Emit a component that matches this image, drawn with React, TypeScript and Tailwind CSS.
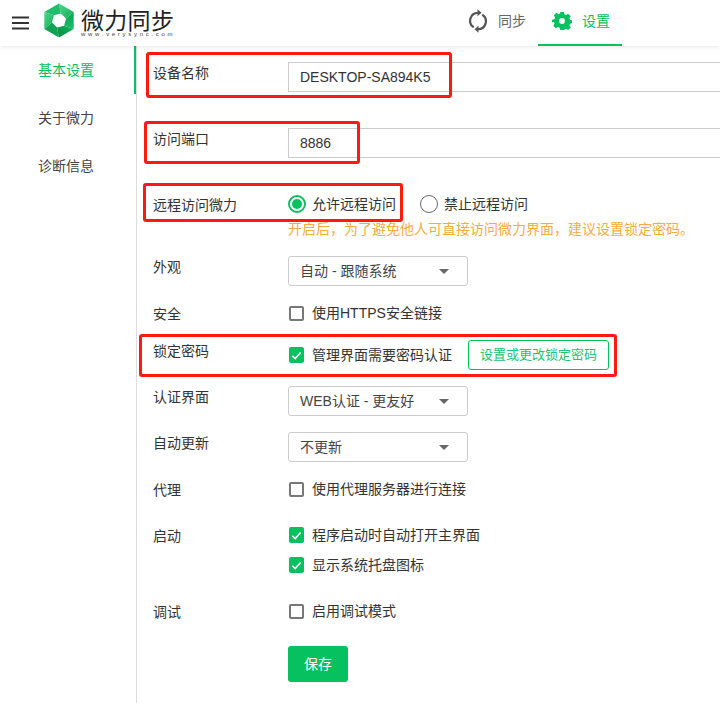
import React from "react";

const font = '"Liberation Sans","Noto Sans CJK SC",sans-serif';

function Row({ label, className = "", children }: { label: string; className?: string; children: React.ReactNode }) {
  return (
    <div className={`flex ${className}`}>
      <div className="w-[135px] h-[20px] pt-[1px] shrink-0 text-[14px] leading-[20px] text-[#333]">{label}</div>
      <div className="flex-1 min-w-0">{children}</div>
    </div>
  );
}

function Check({ checked, label, className = "" }: { checked?: boolean; label: string; className?: string }) {
  return (
    <div className={`flex items-center h-[20px] text-[14px] text-[#333] ${className}`}>
      {checked ? (
        <span className="ml-[1px] w-[15px] h-[16px] rounded-[2px] bg-[#07c160] flex items-center justify-center mr-[8px]">
          <svg width="11" height="11" viewBox="0 0 12 12" fill="none">
            <path d="M1.500 6.400 4.600 9.400 10.500 2.800" stroke="#fff" strokeWidth="1.700" />
          </svg>
        </span>
      ) : (
        <span className="ml-[1px] w-[15px] h-[15px] rounded-[2px] border-2 border-[#777] bg-white mr-[8px]" />
      )}
      <span className="pt-[1px]">{label}</span>
    </div>
  );
}

function Select({ value, className = "" }: { value: string; className?: string }) {
  return (
    <div className={`w-[180px] h-[30px] border border-[#ccc] rounded-[3px] pl-[11px] pr-[18px] flex items-center justify-between text-[14px] text-[#444] ${className}`}>
      <span>{value}</span>
      <span className="w-0 h-0 border-x-[5px] border-x-transparent border-t-[5px] border-t-[#666]" />
    </div>
  );
}

function Callout({ className }: { className: string }) {
  return <div className={`absolute border-[3px] border-[#ff1a10] rounded-[3px] pointer-events-none ${className}`} />;
}

export default function App() {
  return (
    <div className="relative w-[720px] h-[703px] overflow-hidden bg-white" style={{ fontFamily: font }}>
      <header className="h-[46px] flex items-center bg-white shadow-[0_1px_4px_rgba(0,0,0,0.1)] relative z-10">
        <svg className="ml-[12px] mr-[15px]" width="17" height="14" viewBox="0 0 17 14">
          <path d="M0 1.500H17M0 7H17M0 12.500H17" stroke="#333" strokeWidth="2" />
        </svg>
        <svg width="30" height="35" viewBox="-0.500 0 31 35" className="mr-[7px] -mt-[5px]">
          <defs>
            <linearGradient id="a" x1="0" y1="0" x2="1" y2="1"><stop offset="0" stopColor="#4fd68a" /><stop offset="1" stopColor="#12ad5a" /></linearGradient>
            <linearGradient id="b" x1="0" y1="0" x2="0" y2="1"><stop offset="0" stopColor="#0d9f52" /><stop offset="1" stopColor="#1dbd68" /></linearGradient>
            <linearGradient id="c" x1="1" y1="0" x2="0" y2="1"><stop offset="0" stopColor="#17b562" /><stop offset="1" stopColor="#07893f" /></linearGradient>
          </defs>
          <path d="M15 0 30.200 8.750 22.240 15.560 16.940 10.260Z" fill="url(#a)" />
          <path d="M30.200 8.750V26.250L20.300 22.800 22.240 15.560Z" fill="url(#b)" />
          <path d="M30.200 26.250 15 35 13.060 24.740 20.300 22.800Z" fill="url(#c)" />
          <path d="M15 35-.2 26.250 7.760 19.440 13.060 24.740Z" fill="#10a354" />
          <path d="M-.2 26.250V8.750L9.700 12.200 7.760 19.440Z" fill="url(#a)" />
          <path d="M-.2 8.750 15 0 16.940 10.260 9.700 12.200Z" fill="#22bd6c" />
        </svg>
        <div className="flex flex-col -mt-[3px]">
          <span className="text-[23px] leading-[24px] text-[#222] tracking-[0.3px]" style={{ fontFamily: '"Noto Sans CJK SC",sans-serif' }}>微力同步</span>
          <span className="text-[6px] leading-[6px] text-[#444] tracking-[2.700px]">www.verysync.com</span>
        </div>
        <nav className="ml-auto flex h-full mr-[98px]">
          <div className="flex items-center gap-[10px] pb-[4px] pl-[11px] pr-[12px] text-[14px] text-[#666]">
            <svg width="20" height="24" viewBox="0 0 20 24" fill="none" stroke="#555" strokeWidth="2.200">
              <path d="M5.800 18.200A7.800 7.800 0 0 1 10 3.800" />
              <path d="M14.200 5.800A7.800 7.800 0 0 1 10 20.200" />
              <path d="M9.500 .3 13.500 3.800 9.500 7.300ZM10.500 16.700 6.500 20.200 10.500 23.700Z" fill="#555" strokeWidth="0" />
            </svg>
            同步
          </div>
          <div className="flex items-center gap-[10px] w-[84px] pl-[14px] pb-[2px] text-[14px] text-[#07c160] border-b-2 border-[#07c160]">
            <svg width="20" height="20" viewBox="-1 -1 22 22">
              <path
                fillRule="evenodd"
                fill="#07c160"
                d="M8 0h4l.600 2.700 1.900.800 2.300-1.500 2.800 2.800-1.500 2.300.800 1.900 2.700.600v2.800l-2.700.600-.800 1.900 1.500 2.300-2.800 2.800-2.300-1.500-1.900.800L12 20H8l-.600-2.700-1.900-.800-2.300 1.500-2.800-2.800 1.500-2.300-.800-1.900L-1 11.400V8.600l2.700-.600.800-1.900L1 3.800l2.800-2.800 2.300 1.500 1.900-.800L8 0Zm2 6.800a3.200 3.200 0 1 0 0 6.400 3.200 3.200 0 0 0 0-6.400Z"
              />
            </svg>
            设置
          </div>
        </nav>
      </header>

      <div className="flex h-[657px]">
        <aside className="w-[137px] shrink-0 border-r border-[#ddd] text-[14px]">
          <div className="h-[48px] border-r-2 border-[#07c160] pl-[38px] pt-[14px] leading-[20px] text-[#07c160]">基本设置</div>
          <div className="h-[48px] pl-[38px] pt-[14px] leading-[20px] text-[#444]">关于微力</div>
          <div className="h-[48px] pl-[38px] pt-[14px] leading-[20px] text-[#444]">诊断信息</div>
        </aside>
        <main className="flex-1 min-w-0 pl-[16px]">
          <Row label="设备名称" className="mt-[16px]">
            <div className="w-[500px] h-[30px] border border-[#ccc] pl-[11px] flex items-center text-[14px] text-[#333]">DESKTOP-SA894K5</div>
          </Row>
          <Row label="访问端口" className="mt-[36px]">
            <div className="w-[500px] h-[30px] border border-[#ccc] pl-[11px] flex items-center text-[14px] text-[#333]">8886</div>
          </Row>
          <Row label="远程访问微力" className="mt-[36px]">
            <div className="flex items-center h-[20px] text-[14px] text-[#333]">
              <span className="w-[18px] h-[18px] rounded-full border-2 border-[#07c160] flex items-center justify-center mr-[6px]">
                <span className="w-[10px] h-[10px] rounded-full bg-[#07c160]" />
              </span>
              <span className="pt-[1px]">允许远程访问</span>
              <span className="w-[18px] h-[18px] rounded-full border border-[#666] ml-[24px] mr-[6px]" />
              <span className="pt-[1px]">禁止远程访问</span>
            </div>
            <div className="mt-[5px] text-[14px] leading-[20px] text-[#f9ab3c] whitespace-nowrap">开启后，为了避免他人可直接访问微力界面，建议设置锁定密码。</div>
          </Row>
          <Row label="外观" className="mt-[17px]">
            <Select value="自动 - 跟随系统" />
          </Row>
          <Row label="安全" className="mt-[17px]">
            <Check label="使用HTTPS安全链接" />
          </Row>
          <Row label="锁定密码" className="mt-[17px]">
            <div className="flex items-center h-[30px]">
              <Check checked label="管理界面需要密码认证" />
              <div className="ml-[16px] w-[141px] h-[30px] border border-[#07c160] rounded-[3px] flex items-center justify-center text-[13px] text-[#22c46f]">设置或更改锁定密码</div>
            </div>
          </Row>
          <Row label="认证界面" className="mt-[16px]">
            <Select value="WEB认证 - 更友好" />
          </Row>
          <Row label="自动更新" className="mt-[16px]">
            <Select value="不更新" />
          </Row>
          <Row label="代理" className="mt-[17px]">
            <Check label="使用代理服务器进行连接" />
          </Row>
          <Row label="启动" className="mt-[26px]">
            <Check checked label="程序启动时自动打开主界面" />
            <Check checked label="显示系统托盘图标" className="mt-[10px]" />
          </Row>
          <Row label="调试" className="mt-[26px]">
            <Check label="启用调试模式" />
          </Row>
          <div className="ml-[135px] mt-[25px] w-[60px] h-[36px] rounded-[3px] bg-[#07c160] text-white text-[14px] flex items-center justify-center">保存</div>
        </main>
      </div>

      <Callout className="left-[146px] top-[52px] w-[306px] h-[46px]" />
      <Callout className="left-[144px] top-[121px] w-[216px] h-[43px]" />
      <Callout className="left-[143px] top-[183px] w-[260px] h-[39px]" />
      <Callout className="left-[139px] top-[334px] w-[478px] h-[43px]" />
    </div>
  );
}
